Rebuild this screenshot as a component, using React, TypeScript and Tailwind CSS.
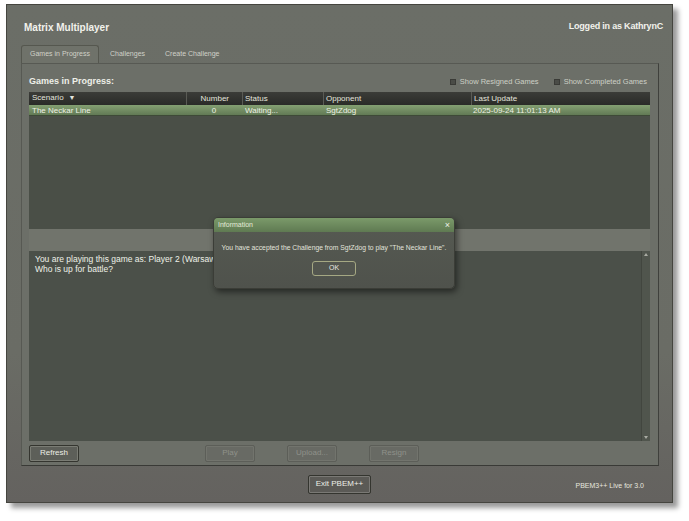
import type { ReactNode } from 'react'

const cols = 'grid grid-cols-[157px_56px_81px_148px_1fr]'

function Tab({ label, active }: { label: string; active?: boolean }) {
  return (
    <div
      className={
        active
          ? 'flex h-[18px] w-[78px] items-center justify-center rounded-t-[3px] border border-b-0 border-[#55574f] bg-[#6f726a] text-[7px] text-[#cfd1c8]'
          : 'flex h-[18px] items-center px-[9px] text-[7px] text-[#cfd1c8]'
      }
    >
      {label}
    </div>
  )
}

function Check({ label }: { label: string }) {
  return (
    <div className="flex items-center gap-[4px]">
      <div className="h-[6px] w-[6px] border border-[#3a3b37] bg-[#4a4c47]" />
      <span className="text-[7.5px] text-[#cdd0c6]">{label}</span>
    </div>
  )
}

function Btn({ children, disabled, w = 'w-[50px]' }: { children: ReactNode; disabled?: boolean; w?: string }) {
  return (
    <div
      className={
        disabled
          ? `flex h-[17px] ${w} items-center justify-center rounded-[2px] border border-[#5c5e58] bg-[#686a64] text-[8px] text-[#8f918a] shadow-[inset_0_0_0_1px_#72746d]`
          : `flex h-[17px] ${w} items-center justify-center rounded-[2px] border border-[#34352f] bg-[#5d5f59] text-[8px] text-[#eceee6] shadow-[inset_0_0_0_1px_#7a7c74]`
      }
    >
      {children}
    </div>
  )
}

export default function App() {
  return (
    <div className="min-h-screen bg-white pl-[6px] pt-[4px] font-['Liberation_Sans',Arial,sans-serif]">
      <div className="relative flex h-[499px] w-[667px] flex-col border border-[#45453f] bg-[linear-gradient(180deg,#6b6e67_0%,#6a6c65_70%,#64625f_100%)] shadow-[5px_5px_5px_rgba(0,0,0,0.4)]">
        {/* header */}
        <div className="flex h-[40px] items-center justify-between pl-[17px] pr-[9px] pt-[4px]">
          <div className="text-[10px] font-bold text-[#f2f2ec]">Matrix Multiplayer</div>
          <div className="text-[9px] font-bold tracking-[-0.2px] text-[#f2f2ec]">Logged in as KathrynC</div>
        </div>

        {/* tabs */}
        <div className="flex items-end gap-[2px] pl-[14px]">
          <Tab label="Games in Progress" active />
          <Tab label="Challenges" />
          <Tab label="Create Challenge" />
        </div>

        {/* panel */}
        <div className="ml-[14px] mr-[13px] flex h-[403px] flex-col border border-[#575953] border-b-[#393a36] border-r-[#3f403c] bg-[#6c6f68]">
          <div className="flex h-[28px] items-center justify-between pl-[7px] pr-[11px] pt-[8px]">
            <div className="text-[9px] font-bold text-[#eeefe8]">Games in Progress:</div>
            <div className="flex items-center gap-[15px]">
              <Check label="Show Resigned Games" />
              <Check label="Show Completed Games" />
            </div>
          </div>

          {/* table */}
          <div className="mx-[7px] mr-[8px] h-[137px] bg-[#4a4f47] text-[8px]">
            <div className={`${cols} h-[13px] items-center bg-[linear-gradient(180deg,#3b3c38,#2a2b28)] text-[#e4e5de]`}>
              <div className="flex items-center gap-[5px] pl-[3px]">
                Scenario <span className="text-[7px]">▼</span>
              </div>
              <div className="h-full border-l border-[#5a5b55] pr-[13px] text-right leading-[13px]">Number</div>
              <div className="h-full border-l border-[#5a5b55] pl-[2px] leading-[13px]">Status</div>
              <div className="h-full border-l border-[#5a5b55] pl-[2px] leading-[13px]">Opponent</div>
              <div className="h-full border-l border-[#5a5b55] pl-[2px] leading-[13px]">Last Update</div>
            </div>
            <div className={`${cols} h-[11px] items-center border-b border-[#3e4a37] bg-[linear-gradient(180deg,#84a072,#627a55)] text-[#eef2e4]`}>
              <div className="pl-[3px]">The Neckar Line</div>
              <div className="text-center">0</div>
              <div className="pl-[3px]">Waiting...</div>
              <div className="pl-[3px]">SgtZdog</div>
              <div className="pl-[2px]">2025-09-24 11:01:13 AM</div>
            </div>
          </div>

          <div className="mx-[7px] mr-[8px] h-[22px] bg-[#71746c]" />

          {/* message area */}
          <div className="mx-[7px] mr-[8px] flex h-[191px] bg-[#4b5049]">
            <div className="flex-1 pl-[6px] pt-[3px] text-[8.5px] leading-[10px] text-[#eef0e8]">
              <div>You are playing this game as: Player 2 (Warsaw Pact)</div>
              <div>Who is up for battle?</div>
            </div>
            <div className="flex w-[9px] flex-col items-center justify-between border-l border-[#42463f] bg-[#50554d] py-[2px]">
              <div className="h-0 w-0 border-x-[2.5px] border-b-[3px] border-x-transparent border-b-[#a9aba3]" />
              <div className="h-0 w-0 border-x-[2.5px] border-t-[3px] border-x-transparent border-t-[#a9aba3]" />
            </div>
          </div>

          {/* buttons */}
          <div className="flex h-[24px] items-center pl-[7px]">
            <Btn>Refresh</Btn>
            <div className="ml-[126px] flex gap-[32px]">
              <Btn disabled>Play</Btn>
              <Btn disabled>Upload...</Btn>
              <Btn disabled>Resign</Btn>
            </div>
          </div>
        </div>

        {/* footer */}
        <div className="relative flex flex-1 items-center justify-center">
          <div className="flex h-[19px] w-[63px] items-center justify-center rounded-[2px] border border-[#34352f] bg-[#5b5a56] text-[8px] text-[#eceee6] shadow-[inset_0_0_0_1px_#7a7975]">
            Exit PBEM++
          </div>
          <div className="absolute right-[28px] top-[15px] text-[7px] text-[#e6e6df]">PBEM3++ Live for 3.0</div>
        </div>

        {/* dialog */}
        <div className="absolute left-[206px] top-[212px] flex h-[72px] w-[242px] flex-col overflow-hidden rounded-[5px] border border-[#3b3d37] bg-[linear-gradient(180deg,#565a52,#4f524c)] shadow-[2px_3px_6px_rgba(0,0,0,0.5)]">
          <div className="flex h-[14px] items-center justify-between bg-[linear-gradient(180deg,#7b9a6a,#5f7a52)] px-[4px] text-[7px] text-[#e4ead8]">
            <span>Information</span>
            <span className="text-[9px] leading-none text-[#eef3e6]">×</span>
          </div>
          <div className="pt-[11px] text-center text-[6.8px] text-[#e2e3dc]">
            You have accepted the Challenge from SgtZdog to play "The Neckar Line".
          </div>
          <div className="mt-[8px] flex justify-center">
            <div className="flex h-[15px] w-[44px] items-center justify-center rounded-[3px] border border-[#a5a883] bg-[#53564f] text-[7px] text-[#e8e9e0]">
              OK
            </div>
          </div>
        </div>
      </div>
    </div>
  )
}
